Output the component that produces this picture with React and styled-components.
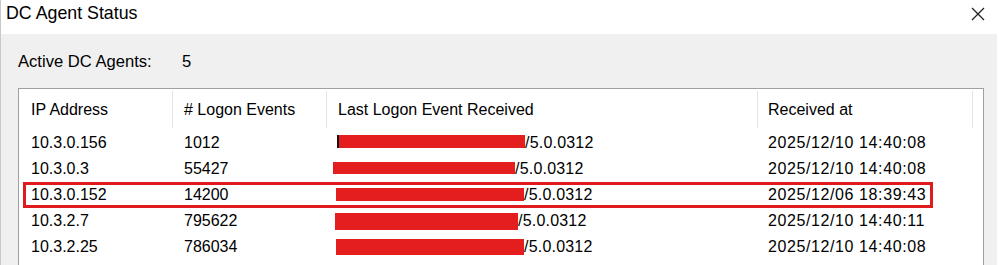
import React from "react"
import styled, { createGlobalStyle } from "styled-components"

const GlobalStyle = createGlobalStyle`
  html, body {
    margin: 0;
    padding: 0;
    background: #ffffff;
  }
`

const Window = styled.div`
  width: 999px;
  height: 265px;
  overflow: hidden;
  background: #ffffff;
  border-left: 1px solid #c8c8c8;
  box-sizing: border-box;
  font-family: "Liberation Sans", Arial, sans-serif;
  color: #000;
`

const TitleBar = styled.div`
  height: 34px;
  display: flex;
  align-items: center;
  justify-content: space-between;
  padding: 0 14px 0 5px;
`

const Title = styled.div`
  font-size: 17.8px;
  padding-bottom: 7px;
`

const Close = styled.div`
  display: flex;
  padding-bottom: 6px;
`

const Body = styled.div`
  background: #f0f0f0;
  margin-right: 2px;
  height: 231px;
  padding: 0 13px 0 17px;
  box-sizing: border-box;
`

const CountRow = styled.div`
  height: 54px;
  display: flex;
  align-items: center;
  font-size: 16.6px;
  padding-top: 1px;
  box-sizing: border-box;
`

const CountLabel = styled.span`
  width: 164px;
`

const ListBox = styled.div`
  background: #ffffff;
  border: 1px solid #a0a0a0;
  border-bottom: none;
  height: 190px;
  font-size: 16px;
`

const Row = styled.div`
  position: relative;
  display: grid;
  grid-template-columns: 154px 154px 431px 215px;
  height: ${p => (p.$header ? "41px" : "26px")};
  align-items: center;

  ${p =>
    p.$marked &&
    `
    &::after {
      content: "";
      position: absolute;
      left: 4px;
      top: 0;
      width: 910px;
      height: 26px;
      border: 3px solid #e01b1f;
      box-sizing: border-box;
    }
  `}
`

const HeadCell = styled.div`
  height: 37px;
  display: flex;
  align-items: center;
  padding-left: ${p => p.$pad || 11}px;
  border-right: 1px solid #e3e3e3;
`

const Cell = styled.div`
  display: flex;
  align-items: center;
  padding-left: ${p => p.$pad || 11}px;
  letter-spacing: ${p => p.$spread || 0}px;
  white-space: nowrap;
`

const Redact = styled.span`
  display: inline-block;
  background: #e41d1f;
  width: ${p => p.$w}px;
  height: ${p => p.$h}px;
  margin-left: ${p => p.$off}px;
  margin-top: ${p => p.$dy}px;
  ${p => p.$tick && `border-left: 2px solid #111;`}
`

const agents = [
  { ip: "10.3.0.156", events: "1012", bar: { w: 186, h: 13, off: -1, dy: -3, tick: true }, at: "2025/12/10 14:40:08" },
  { ip: "10.3.0.3", events: "55427", bar: { w: 182, h: 12, off: -5, dy: -3 }, at: "2025/12/10 14:40:08" },
  { ip: "10.3.0.152", events: "14200", bar: { w: 188, h: 13, off: -2, dy: -2 }, at: "2025/12/06 18:39:43", marked: true },
  { ip: "10.3.2.7", events: "795622", bar: { w: 183, h: 17, off: -3, dy: 0 }, at: "2025/12/10 14:40:11" },
  { ip: "10.3.2.25", events: "786034", bar: { w: 188, h: 16, off: -2, dy: 0 }, at: "2025/12/10 14:40:08" },
]

const CloseIcon = () => (
  <svg width="14" height="14" viewBox="0 0 14 14">
    <path d="M1 1 L13 13 M13 1 L1 13" stroke="#222" strokeWidth="1.3" fill="none" />
  </svg>
)

export default function App() {
  return (
    <>
      <GlobalStyle />
      <Window>
        <TitleBar>
          <Title>DC Agent Status</Title>
          <Close>
            <CloseIcon />
          </Close>
        </TitleBar>
        <Body>
          <CountRow>
            <CountLabel>Active DC Agents:</CountLabel>
            <span>5</span>
          </CountRow>
          <ListBox>
            <Row $header>
              <HeadCell $pad={12}>IP Address</HeadCell>
              <HeadCell>&#35; Logon Events</HeadCell>
              <HeadCell>Last Logon Event Received</HeadCell>
              <HeadCell $pad={10}>Received at</HeadCell>
            </Row>
            {agents.map(a => (
              <Row key={a.ip} $marked={a.marked}>
                <Cell $pad={12}>{a.ip}</Cell>
                <Cell>{a.events}</Cell>
                <Cell $spread={0.2}>
                  <Redact
                    $w={a.bar.w}
                    $h={a.bar.h}
                    $off={a.bar.off}
                    $dy={a.bar.dy}
                    $tick={a.bar.tick}
                  />
                  /5.0.0312
                </Cell>
                <Cell $pad={10} $spread={0.6}>{a.at}</Cell>
              </Row>
            ))}
          </ListBox>
        </Body>
      </Window>
    </>
  )
}
